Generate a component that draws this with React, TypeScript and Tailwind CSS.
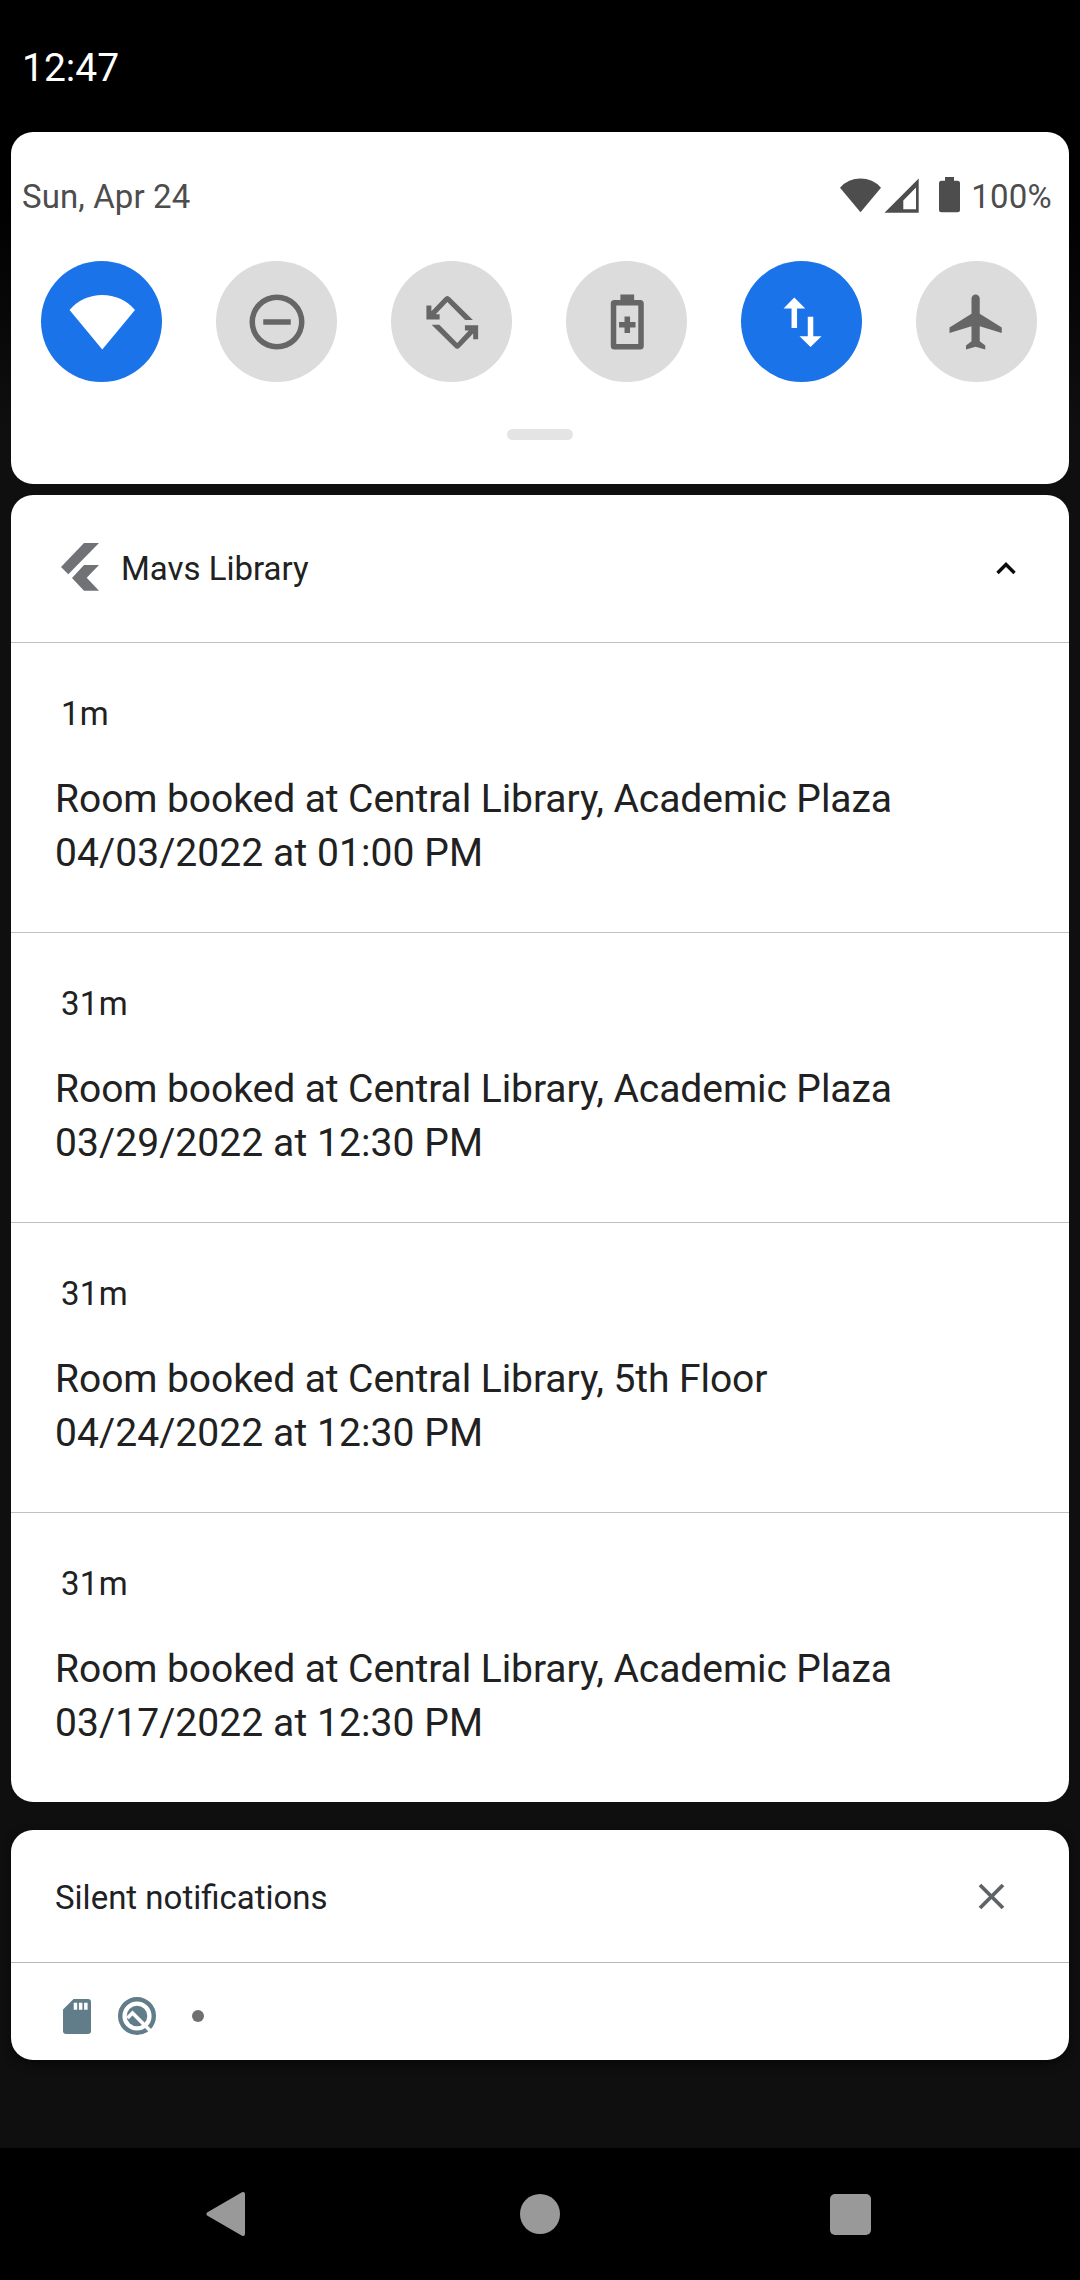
import React from "react";

const TILE_ICONS = {
  wifi: <path d="M12.1 22 .2 7.6A15.7 15.7 0 0 1 24 7.6z" />,
  dnd: (
    <path d="M7 11v2h10v-2zM12 2a10 10 0 1 0 0 20 10 10 0 0 0 0-20zm0 18a8 8 0 1 1 0-16 8 8 0 0 1 0 16z" />
  ),
  rotate: (
    <>
      <path d="M2.7 6h1.8v2.1l4.8-5q1-1.1 2 0l8.3 8.2h-2.8L10.3 4.7 6.1 9.2h1.4v1.9H2.7z" />
      <path
        transform="rotate(180 12.1 12.15)"
        d="M2.7 6h1.8v2.1l4.8-5q1-1.1 2 0l8.3 8.2h-2.8L10.3 4.7 6.1 9.2h1.4v1.9H2.7z"
      />
    </>
  ),
  battery: (
    <path
      fillRule="evenodd"
      d="M9.6 2h5v2h2.2q1.3 0 1.3 1.3v15.4q0 1.3-1.3 1.3H7.4q-1.3 0-1.3-1.3V5.3Q6.1 4 7.4 4h2.2zM8.1 6v14h8V6zM11.1 10h2v2h2v2h-2v2h-2v-2h-2v-2h2z"
    />
  ),
  data: (
    <path d="M16.1 17.2V10.1h-2v7.1h-3L15.1 21.1l4-3.9zM9.2 3.1 5.3 7.1h2.9v7.1h2V7.1h3z" />
  ),
  plane: (
    <path d="M21 16v-2l-8-5V3.5c0-.83-.67-1.5-1.500-1.500S10 2.670 10 3.500V9l-8 5v2l8-2.500V19l-2 1.500V22l3.500-1 3.500 1v-1.500L13 19v-5.500l8 2.500z" />
  ),
};

const TILES: { icon: keyof typeof TILE_ICONS; on: boolean }[] = [
  { icon: "wifi", on: true },
  { icon: "dnd", on: false },
  { icon: "rotate", on: false },
  { icon: "battery", on: false },
  { icon: "data", on: true },
  { icon: "plane", on: false },
];

const NOTIFICATIONS = [
  { age: "1m", place: "Academic Plaza", when: "04/03/2022 at 01:00 PM" },
  { age: "31m", place: "Academic Plaza", when: "03/29/2022 at 12:30 PM" },
  { age: "31m", place: "5th Floor", when: "04/24/2022 at 12:30 PM" },
  { age: "31m", place: "Academic Plaza", when: "03/17/2022 at 12:30 PM" },
];

function QuickSettings() {
  return (
    <section className="h-[352px] rounded-[22px] bg-white">
      <div className="flex h-[129px] items-start justify-between pt-[42px] pr-[17px] pl-[11px] text-[33px] leading-[44px] text-[#4d4d4d]">
        <span className="mt-px tracking-[0.1px]">Sun, Apr 24</span>
        <div className="flex">
          <svg width="134" height="44" viewBox="829 174 134 44" fill="#4d4d4d">
            <path d="M860.5 212.3 840 187.7a27.3 27.3 0 0 1 41 0z" />
            <path fillRule="evenodd" d="M918.7 178.5V212.7H884.5zM916 187.5 903.3 200.5V209.3H916z" />
            <path d="M945 177h9v3.700h3.500q2.500 0 2.500 2.500v26.600q0 2.500-2.500 2.500h-16q-2.500 0-2.500-2.500v-26.600q0-2.500 2.500-2.500h3.500z" />
          </svg>
          <span className="mt-px ml-[8px] tracking-[0.25px]">100%</span>
        </div>
      </div>
      <div className="flex justify-between pr-[32px] pl-[30px]">
        {TILES.map((t) => (
          <div
            key={t.icon}
            className={
              t.on
                ? "flex size-[121px] items-center justify-center rounded-full bg-[#1a73e8] text-white"
                : "flex size-[121px] items-center justify-center rounded-full bg-[#dcdcdc] text-[#666666]"
            }
          >
            <svg className="size-[66px]" viewBox="0 0 24 24" fill="currentColor">
              {TILE_ICONS[t.icon]}
            </svg>
          </div>
        ))}
      </div>
      <div className="mx-auto mt-[47px] h-[11px] w-[66px] rounded-full bg-[#e4e4e4]" />
    </section>
  );
}

function NotificationGroup() {
  return (
    <section className="mt-[11px] h-[1307px] overflow-hidden rounded-[22px] bg-white text-[#212121]">
      <header className="flex h-[147px] items-center pl-[50px]">
        <svg className="mb-[3px]" width="38" height="48" viewBox="61 543 38 48" fill="#717275">
          <path d="M84 543h15L68.300 574.300 61 567z" />
          <path d="M84 565h15L86.700 577.700 99 590.700H84L72 578z" />
        </svg>
        <span className="ml-[22px] text-[33px] leading-[44px]">Mavs Library</span>
        <svg className="mr-[53px] mb-px ml-auto" width="20" height="14" viewBox="0 0 20 14" fill="none">
          <path d="M1.500 12 10 3.500l8.500 8.500" stroke="#0a0a0a" strokeWidth="3.400" />
        </svg>
      </header>
      {NOTIFICATIONS.map((n) => (
        <article key={n.when} className="h-[290px] border-t border-[#c0c0c0] pt-[49px] pl-[44px]">
          <div className="pl-[6px] text-[33px] leading-[44px] tracking-[0.3px]">{n.age}</div>
          <div className="mt-[36px] text-[39px] leading-[54px]">
            <p className="tracking-[-0.07px]">Room booked at Central Library, {n.place}</p>
            <p className="tracking-[0.08px]">{n.when}</p>
          </div>
        </article>
      ))}
    </section>
  );
}

function SilentNotifications() {
  return (
    <section className="mt-[28px] h-[230px] rounded-[22px] bg-white text-[#202124] shadow-[0_4px_10px_rgba(0,0,0,0.5)]">
      <header className="flex h-[132px] items-center justify-between pr-[64px] pl-[44px]">
        <h2 className="mt-[3px] text-[33px] leading-[44px]">Silent notifications</h2>
        <svg width="27" height="27" viewBox="0 0 27 27" stroke="#5f6368" strokeWidth="3.800">
          <path d="M2 2 25 25M25 2 2 25" />
        </svg>
      </header>
      <div className="flex items-center border-t border-[#b8b8b8] pt-[33px] pl-[52px]">
        <svg width="28" height="35" viewBox="0 0 28 35" fill="#607d89">
          <path
            fillRule="evenodd"
            d="M10.500 0H25q3 0 3 3v29q0 3-3 3H3q-3 0-3-3V10.500zM10.700 3.800v7h3.500v-7zM15.900 3.800v7h3.500v-7zM21.100 3.800v7h3.500v-7z"
          />
        </svg>
        <svg className="ml-[27px]" width="38" height="40" viewBox="-19 -20 38 40" fill="none">
          <circle r="16.800" stroke="#607d89" strokeWidth="4.400" />
          <circle r="10.300" fill="#607d89" />
          <path d="M-9.500 2-4.500-3 13 14.500" stroke="#fff" strokeWidth="3.600" />
        </svg>
        <span className="ml-[36px] size-[12px] rounded-full bg-[#707070]" />
      </div>
    </section>
  );
}

function NavigationBar() {
  return (
    <nav className="flex h-[132px] items-center justify-between bg-black pr-[209px] pl-[206px]">
      <svg width="40" height="46" viewBox="0 0 40 46" fill="#999" stroke="#999" strokeWidth="4" strokeLinejoin="round">
        <path d="M2.500 23 37 3v40z" />
      </svg>
      <span className="ml-[4px] size-[40px] rounded-full bg-[#999]" />
      <span className="size-[41px] rounded-[5px] bg-[#999]" />
    </nav>
  );
}

export default function App() {
  return (
    <div className="flex h-[2280px] w-[1080px] flex-col bg-[linear-gradient(#000_0,#000_200px,#0f0f0f_430px)] font-['Roboto',sans-serif]">
      <header className="h-[132px] bg-black pt-[44px] pl-[22px] text-[39px] leading-[48px] text-white">12:47</header>
      <main className="flex-1 px-[11px]">
        <QuickSettings />
        <NotificationGroup />
        <SilentNotifications />
      </main>
      <NavigationBar />
    </div>
  );
}
